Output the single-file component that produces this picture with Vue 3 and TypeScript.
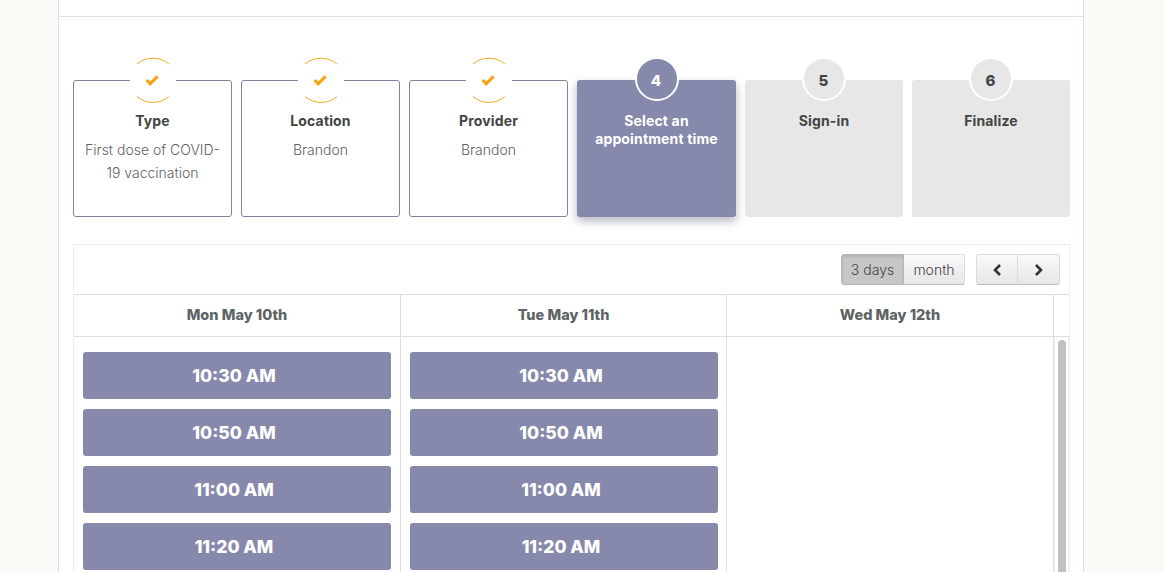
<script setup lang="ts">
interface Step {
  num: number
  title: string
  detail?: string
  state: 'done' | 'active' | 'todo'
}

const steps: Step[] = [
  { num: 1, title: 'Type', detail: 'First dose of COVID-19 vaccination', state: 'done' },
  { num: 2, title: 'Location', detail: 'Brandon', state: 'done' },
  { num: 3, title: 'Provider', detail: 'Brandon', state: 'done' },
  { num: 4, title: 'Select an appointment time', state: 'active' },
  { num: 5, title: 'Sign-in', state: 'todo' },
  { num: 6, title: 'Finalize', state: 'todo' },
]

const days = ['Mon May 10th', 'Tue May 11th', 'Wed May 12th']
const times = ['10:30 AM', '10:50 AM', '11:00 AM', '11:20 AM']
const columns = [times, times, [] as string[]]
</script>

<template>
  <main class="page">
    <div class="panel">
      <div class="top-strip"></div>

      <div class="steps">
        <div v-for="step in steps" :key="step.num" class="step" :class="step.state">
          <div class="badge">
            <svg v-if="step.state === 'done'" width="46" height="46" viewBox="0 0 46 46">
              <path d="M7 7A25 25 0 0 1 39 7" fill="none" stroke="#f5ab1f" stroke-width="1" />
              <path d="M7 39.6A25 25 0 0 0 39 39.6" fill="none" stroke="#f5ab1f" stroke-width="1" />
              <path d="M16.6 23L20.2 26.8L27.6 19.4" fill="none" stroke="#f5a313" stroke-width="3.2" />
            </svg>
            <span v-else>{{ step.num }}</span>
          </div>
          <div class="step-title">{{ step.title }}</div>
          <div v-if="step.detail" class="step-detail">{{ step.detail }}</div>
        </div>
      </div>

      <section class="calendar">
        <div class="toolbar">
          <div class="btn-group">
            <button class="btn pressed days-btn">3 days</button>
            <button class="btn month-btn">month</button>
          </div>
          <div class="btn-group nav">
            <button class="btn nav-btn" aria-label="Previous">
              <svg width="10" height="12" viewBox="0 0 10 12">
                <path d="M8 1L3 6L8 11" fill="none" stroke="#333" stroke-width="2.6" />
              </svg>
            </button>
            <button class="btn nav-btn" aria-label="Next">
              <svg width="10" height="12" viewBox="0 0 10 12">
                <path d="M2 1L7 6L2 11" fill="none" stroke="#333" stroke-width="2.6" />
              </svg>
            </button>
          </div>
        </div>

        <div class="day-row">
          <div v-for="day in days" :key="day" class="day">{{ day }}</div>
          <div class="day-spacer"></div>
        </div>

        <div class="slots-row">
          <div v-for="(col, i) in columns" :key="i" class="slots">
            <button v-for="t in col" :key="t" class="slot">{{ t }}</button>
          </div>
          <div class="scroll-track"><div class="scroll-thumb"></div></div>
        </div>
      </section>
    </div>
  </main>
</template>

<style>
html,
body {
  margin: 0;
  overflow: hidden;
}
</style>

<style scoped>
.page {
  height: 572px;
  overflow: hidden;
  background: #fbfaf6;
  font-family: Inter, "Liberation Sans", sans-serif;
  color: #444;
}

.panel {
  box-sizing: border-box;
  width: 1026px;
  height: 572px;
  margin-left: 58px;
  background: #fff;
  border-left: 1px solid #dcdfe6;
  border-right: 1px solid #dcdfe6;
  overflow: hidden;
}

.top-strip {
  height: 16px;
  border-bottom: 1px solid #dbe3e6;
}

.steps {
  display: grid;
  grid-template-columns: repeat(4, 159px) 158px 158px;
  column-gap: 9px;
  margin: 63px 0 0 14px;
}

.step {
  box-sizing: border-box;
  position: relative;
  height: 137px;
  padding: 32px 8px 0;
  border-radius: 3px;
  text-align: center;
}

.step.done {
  border: 1px solid #82849e;
  padding: 31px 7px 0;
}

.step.active {
  background: #8688ac;
  color: #fff;
  box-shadow: 0 4px 10px rgba(70, 72, 110, 0.4);
}

.step.todo {
  background: #e7e7e7;
}

.badge {
  box-sizing: border-box;
  position: absolute;
  top: -23px;
  left: 50%;
  width: 44px;
  height: 44px;
  margin-left: -22px;
  padding: 2px 1px 0 0;
  border: 2px solid #fff;
  border-radius: 50%;
  display: flex;
  align-items: center;
  justify-content: center;
  font-size: 15px;
  font-weight: 800;
}

.done .badge {
  top: -24px;
  width: 46px;
  height: 46px;
  margin-left: -23px;
  padding: 0;
  border: 0;
  background: #fff;
}

.active .badge {
  background: #8688ac;
}

.todo .badge {
  background: #e7e7e7;
}

.step-title {
  font-size: 14px;
  font-weight: 700;
  line-height: 18px;
  letter-spacing: 0.15px;
}

.step-detail {
  margin-top: 8px;
  font-size: 14px;
  line-height: 23px;
  font-weight: 300;
  color: #5f6068;
}

.calendar {
  box-sizing: border-box;
  width: 997px;
  margin: 27px 0 0 14px;
  border: 1px solid #eee;
  border-bottom: 0;
}

.toolbar {
  display: flex;
  justify-content: flex-end;
  gap: 11px;
  height: 49px;
  padding: 9px 9px 0 0;
  box-sizing: border-box;
}

.btn-group {
  display: flex;
  height: 31px;
}

.btn {
  box-sizing: border-box;
  height: 31px;
  padding: 0;
  border: 1px solid #dcdcdc;
  border-bottom-color: #bdbdbd;
  background: linear-gradient(#fafafa, #e6e6e6);
  font-family: inherit;
  font-size: 14px;
  font-weight: 300;
  color: #444;
  display: flex;
  align-items: center;
  justify-content: center;
}

.btn:first-child {
  border-radius: 3px 0 0 3px;
}

.btn:last-child {
  border-left: 0;
  border-radius: 0 3px 3px 0;
}

.days-btn {
  width: 63px;
}

.month-btn {
  width: 61px;
}

.nav-btn {
  width: 42px;
}

.btn.pressed {
  background: #c6c6c6;
  border-color: #b5b5b5;
  box-shadow: inset 0 2px 3px rgba(0, 0, 0, 0.1);
}

.day-row,
.slots-row {
  display: grid;
  grid-template-columns: 327px 326px 327px 15px;
}

.day-row {
  box-sizing: border-box;
  height: 43px;
  border-top: 1px solid #ddd;
  border-bottom: 1px solid #ddd;
}

.day {
  display: flex;
  align-items: center;
  justify-content: center;
  padding-bottom: 2px;
  border-right: 1px solid #ddd;
  font-size: 14.5px;
  font-weight: 800;
  color: #5d6465;
}

.slots-row {
  height: 240px;
}

.slots {
  display: flex;
  flex-direction: column;
  gap: 10px;
  padding: 15px 9px 0;
  border-right: 1px solid #ddd;
  box-sizing: border-box;
}

.slot {
  flex: none;
  height: 47px;
  width: 308px;
  padding: 0 6px 0 0;
  border: 0;
  border-radius: 3px;
  background: #8688ac;
  color: #fff;
  font-family: inherit;
  font-size: 17.5px;
  font-weight: 800;
}

.scroll-track {
  border-left: 1px solid #f0f0f0;
  border-right: 1px solid #eee;
  padding: 3px 2px 0 3px;
  box-sizing: border-box;
}

.scroll-thumb {
  height: 240px;
  border-radius: 4px 4px 0 0;
  background: #c1c1c1;
}
</style>
